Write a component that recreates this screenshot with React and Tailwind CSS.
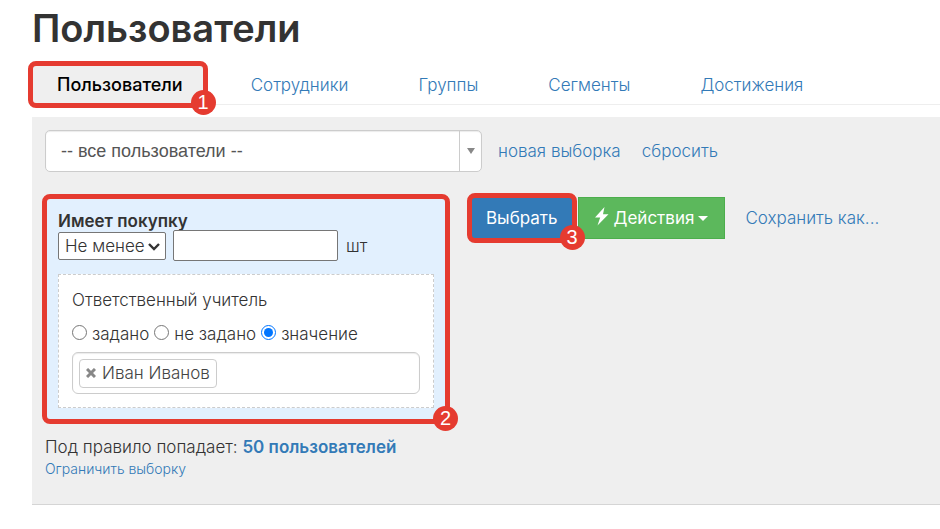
import { useState } from "react";

const TABS = ["Сотрудники", "Группы", "Сегменты", "Достижения"];

const MODES = [
  { id: "set", label: "задано" },
  { id: "unset", label: "не задано" },
  { id: "value", label: "значение" },
];

// red outline with a step number, lies over the content
function Step({ number, className = "-inset-1" }) {
  return (
    <div
      className={`absolute ${className} border-[5px] border-[#e53b30] rounded-lg pointer-events-none z-10`}
    >
      <span className="absolute -right-[13px] -bottom-3 w-[25px] h-[25px] rounded-full bg-[#e53b30] text-white text-xl leading-[25px] text-center font-['Liberation_Sans',sans-serif]">
        {number}
      </span>
    </div>
  );
}

function Tabs() {
  return (
    <nav className="flex h-10 border-b border-[#eeeeee]">
      <div className="relative">
        <a
          href="#users"
          className="flex items-center h-10 pl-[25px] pr-[21px] bg-[#efefef] text-black text-lg font-medium"
        >
          Пользователи
        </a>
        <Step number={1} />
      </div>
      <div className="flex items-center gap-[70px] ml-[47px]">
        {TABS.map((tab) => (
          <a key={tab} href="#tab" className="text-[#337ab7]">
            {tab}
          </a>
        ))}
      </div>
    </nav>
  );
}

function RuleCard() {
  const [mode, setMode] = useState("value");
  const [teachers, setTeachers] = useState(["Иван Иванов"]);

  return (
    <div className="relative w-[402px] bg-[#e2f0fe] px-[13px] pt-[15px] pb-[13px]">
      <h2 className="text-[17px] leading-[18px] font-semibold">Имеет покупку</h2>
      <div className="flex items-center">
        <div className="relative">
          <select
            aria-label="Условие"
            className="appearance-none block w-[108px] h-7 pl-[6px] bg-white border border-[#767676] rounded-xs font-light"
          >
            <option>Не менее</option>
          </select>
          <svg
            viewBox="0 0 12 8"
            className="absolute right-[6px] top-[11px] w-3 h-2 pointer-events-none"
            fill="none"
            stroke="#333"
            strokeWidth="2.4"
          >
            <path d="M1 1l5 5 5-5" />
          </svg>
        </div>
        <input
          id="count"
          type="text"
          className="w-[165px] h-[31px] ml-[7px] bg-white border border-[#767676] rounded-xs px-2"
        />
        <label htmlFor="count" className="ml-2">
          шт
        </label>
      </div>

      <div className="mt-[13px] px-[13px] py-[13px] bg-white border border-dashed border-[#cccccc]">
        <div className="leading-6">Ответственный учитель</div>
        <div className="flex items-center mt-2 h-7">
          {MODES.map((m) => (
            <label key={m.id} className="flex items-center mr-[5px]">
              <input
                type="radio"
                name="mode"
                checked={mode === m.id}
                onChange={() => setMode(m.id)}
                className="w-[15px] h-[15px] mr-[5px] mb-1"
              />
              {m.label}
            </label>
          ))}
        </div>
        <div className="flex items-center h-[42px] mt-1 px-[6px] bg-white border border-[#cccccc] rounded-md shadow-[inset_0_1px_1px_rgba(0,0,0,0.08)]">
          {teachers.map((name) => (
            <span
              key={name}
              className="flex items-center h-[29px] px-[6px] border border-[#cccccc] rounded-[4px] text-[#444444]"
            >
              <button
                type="button"
                aria-label="Удалить"
                onClick={() => setTeachers(teachers.filter((t) => t !== name))}
                className="mr-[6px]"
              >
                <svg viewBox="0 0 10 10" className="w-[10px] h-[10px]" stroke="#888" strokeWidth="3">
                  <path d="M1 1l8 8M9 1l-8 8" />
                </svg>
              </button>
              {name}
            </span>
          ))}
          <input
            type="text"
            aria-label="Ответственный учитель"
            className="flex-1 min-w-0 h-8 px-2 focus:outline-none"
          />
        </div>
      </div>
      <Step number={2} className="-inset-[3px]" />
    </div>
  );
}

export default function App() {
  return (
    <div className="pl-8 pt-1 bg-white text-[#333333] text-[17px] leading-6 font-light font-[Inter,sans-serif]">
      <h1 className="text-[38px] leading-[48px] font-semibold">Пользователи</h1>

      <div className="mt-[13px]">
        <Tabs />
      </div>

      <main className="mt-3 px-[13px] pt-[13px] pb-[25px] bg-[#efefef] border-b border-[#d5d5d5]">
        <div className="flex items-center">
          <div className="relative">
            <select
              aria-label="Сегмент"
              className="appearance-none block w-[437px] h-[42px] pl-[15px] bg-white border border-[#cccccc] rounded-[5px] text-[#555555] text-lg leading-6 font-['Liberation_Sans',sans-serif] shadow-[inset_0_1px_1px_rgba(0,0,0,0.08)]"
            >
              <option>-- все пользователи --</option>
            </select>
            <span className="absolute right-0 inset-y-0 w-[23px] border-l border-[#cccccc] flex items-center justify-center pointer-events-none">
              <svg viewBox="0 0 8 6" className="w-2 h-[6px]" fill="#888">
                <path d="M0 0h8L4 6z" />
              </svg>
            </span>
          </div>
          <a href="#new" className="ml-4 text-[#337ab7]">
            новая выборка
          </a>
          <a href="#reset" className="ml-[21px] text-[#337ab7]">
            сбросить
          </a>
        </div>

        <div className="flex items-start mt-[25px]">
          <RuleCard />
          <div className="flex items-center ml-6">
            <div className="relative">
              <button
                type="button"
                className="block h-[42px] px-[14px] bg-[#337ab7] border border-[#2e6da4] text-white font-normal"
              >
                Выбрать
              </button>
              <Step number={3} />
            </div>
            <button
              type="button"
              className="flex items-center h-[42px] ml-[5px] px-4 bg-[#5cb85c] border border-[#4cae4c] text-white font-normal"
            >
              <svg viewBox="0 0 14 19" className="w-[14px] h-[19px] mr-[5px] -mt-1" fill="#fff">
                <path d="M9.5 0L0 10.5h5.2L2.5 18.5 13.5 7.2H8z" />
              </svg>
              Действия
              <svg viewBox="0 0 10 5" className="w-[10px] h-[5px] ml-1" fill="#fff">
                <path d="M0 0h10L5 5z" />
              </svg>
            </button>
            <a href="#save" className="ml-5 text-[#337ab7]">
              Сохранить как...
            </a>
          </div>
        </div>

        <p className="mt-[14px]">
          Под правило попадает:{" "}
          <a href="#result" className="text-[#337ab7] font-semibold">
            50 пользователей
          </a>
        </p>
        <a href="#limit" className="block text-sm leading-5 text-[#337ab7]">
          Ограничить выборку
        </a>
      </main>
    </div>
  );
}
